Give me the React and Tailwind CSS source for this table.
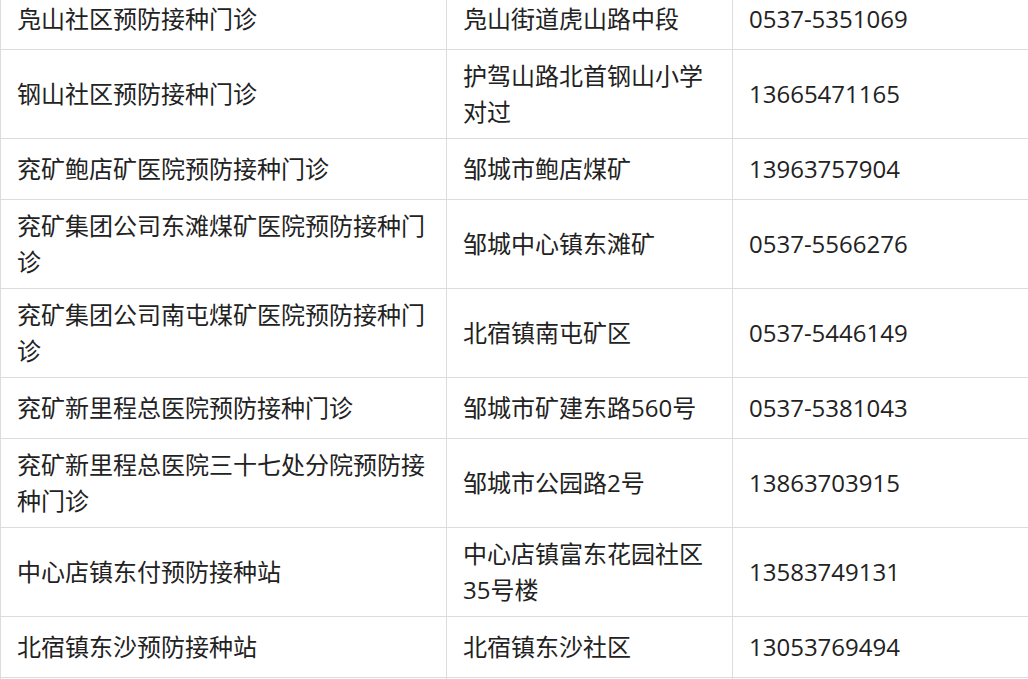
const rows = [
  { name: "凫山社区预防接种门诊", addr: "凫山街道虎山路中段", tel: "0537-5351069", h: "h-[61px]" },
  { name: "钢山社区预防接种门诊", addr: "护驾山路北首钢山小学对过", tel: "13665471165", h: "h-[89px]" },
  { name: "兖矿鲍店矿医院预防接种门诊", addr: "邹城市鲍店煤矿", tel: "13963757904", h: "h-[61px]" },
  { name: "兖矿集团公司东滩煤矿医院预防接种门诊", addr: "邹城中心镇东滩矿", tel: "0537-5566276", h: "h-[89px]" },
  { name: "兖矿集团公司南屯煤矿医院预防接种门诊", addr: "北宿镇南屯矿区", tel: "0537-5446149", h: "h-[89px]" },
  { name: "兖矿新里程总医院预防接种门诊", addr: "邹城市矿建东路560号", tel: "0537-5381043", h: "h-[61px]" },
  { name: "兖矿新里程总医院三十七处分院预防接种门诊", addr: "邹城市公园路2号", tel: "13863703915", h: "h-[89px]" },
  { name: "中心店镇东付预防接种站", addr: "中心店镇富东花园社区35号楼", tel: "13583749131", h: "h-[89px]" },
  { name: "北宿镇东沙预防接种站", addr: "北宿镇东沙社区", tel: "13053769494", h: "h-[61px]" },
];

function Cell({ children }) {
  return (
    <td className="border border-[#dcdcdc] px-4 py-0 align-middle leading-[36px] break-all">
      {children}
    </td>
  );
}

export default function App() {
  return (
    <div className="h-[679px] overflow-hidden bg-white">
      <table
        className="-mt-[12px] w-[1028px] table-fixed border-collapse text-[24px] text-[#222]"
        style={{ fontFamily: '"Open Sans", "Noto Sans CJK SC", sans-serif' }}
      >
        <colgroup>
          <col className="w-[446px]" />
          <col className="w-[286px]" />
          <col className="w-[296px]" />
        </colgroup>
        <tbody>
          {rows.map((row) => (
            <tr key={row.name} className={row.h}>
              <Cell>{row.name}</Cell>
              <Cell>{row.addr}</Cell>
              <Cell>{row.tel}</Cell>
            </tr>
          ))}
          <tr className="h-[61px]">
            <Cell>&nbsp;</Cell>
            <Cell>&nbsp;</Cell>
            <Cell>&nbsp;</Cell>
          </tr>
        </tbody>
      </table>
    </div>
  );
}
